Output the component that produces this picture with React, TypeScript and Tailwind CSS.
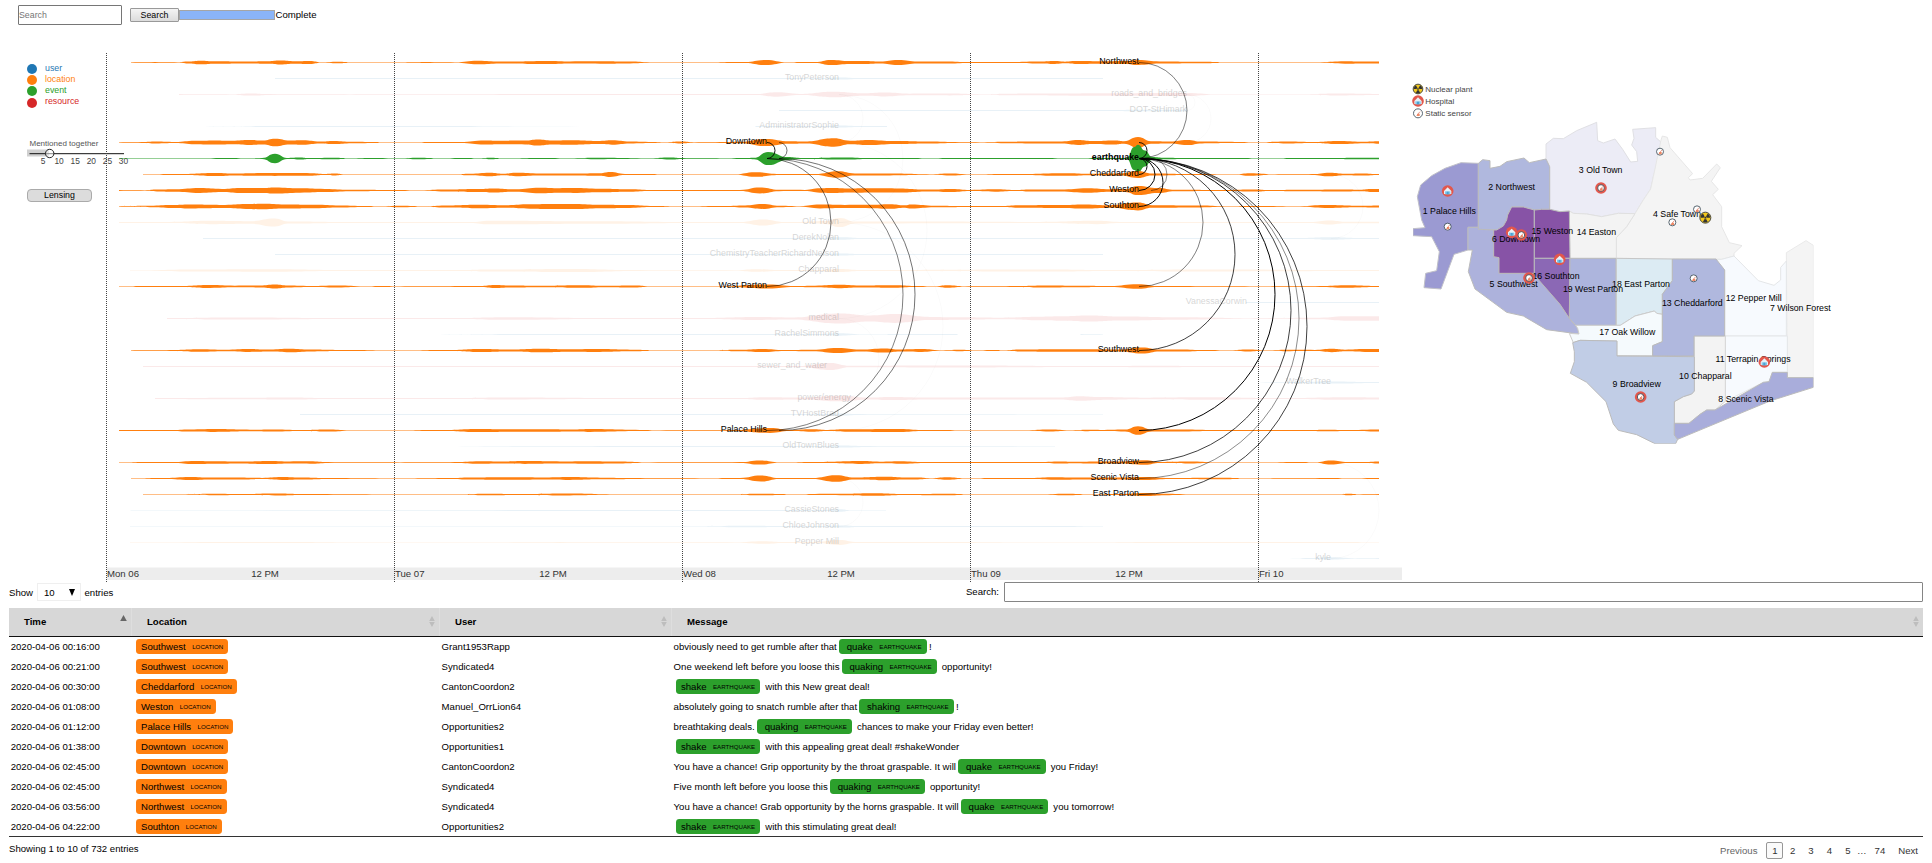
import React from "react";

const LOC = "#ff7f0e";
const EVT = "#2ca02c";
const USR = "#1f77b4";
const RES = "#d62728";

const FIRST_ROW = 62.5;
const ROW = 16;
const rowY = (i: number) => FIRST_ROW + i * ROW;

type Stream = { row: number; color: string; faint?: boolean; pts: string };

/* Each stream lists "x:half-thickness" samples along the time axis. */
const streams: Stream[] = [
  { row: 0, color: LOC, pts: "131:.3 155:.4 178:.3 188:1 200:1.8 215:1.2 245:.9 268:1.2 280:1.9 295:1.2 310:1.5 321:.3 338:.8 352:.3 395:.25 430:.4 455:.35 478:1.8 500:.9 550:1.6 570:1.1 600:1.2 630:.9 650:.3 700:.3 745:.5 765:2.6 788:.3 803:.5 815:.5 831:2.6 850:1.5 864:1.4 880:.9 898:2.4 918:.9 945:1.1 970:.4 1010:.4 1040:.9 1055:1.4 1065:.8 1075:1.4 1105:1.2 1125:1.4 1138:2.5 1160:1.1 1200:.8 1230:.3 1320:.35 1345:1.2 1362:.9 1379:.9" },
  { row: 1, color: USR, faint: true, pts: "275:.4 820:.4 840:1 860:.4 1103:.4" },
  { row: 2, color: RES, faint: true, pts: "179:.4 230:.3 250:1.1 270:.4 350:.3 500:.4 515:.6 600:.4 700:.4 755:.4 777:2.2 800:.6 833:2.8 865:1.2 885:1.9 910:.8 950:.9 980:.3 1010:.8 1050:.9 1100:1.3 1187:1.5 1215:.3 1300:.3 1340:1 1379:.6" },
  { row: 3, color: USR, faint: true, pts: "779:.4 1100:.4 1150:.7 1187:.7" },
  { row: 4, color: USR, faint: true, pts: "205:.1 280:.5 400:.5 580:.1 755:.1 756:.5 820:.5 840:1 860:.5 887:.4" },
  { row: 5, color: LOC, pts: "119:.35 142:.4 156:.9 175:.5 195:1.7 215:2.1 232:1.7 250:2.4 263:2 275:3.7 290:2 303:2.2 320:1 334:1.6 352:.7 378:.4 379:.2 420:.2 426:.4 460:.6 485:2.1 500:1.8 525:1.9 538:3 552:2 570:2.3 600:1.6 612:2.2 630:1 652:.6 665:.2 681:.9 694:.3 720:.4 740:.8 765:3.6 790:1.3 805:1 834:4.2 850:1.8 868:2.6 895:1.4 930:.9 955:.4 980:.3 1005:.7 1025:.9 1040:1 1062:1 1078:2.4 1092:1.4 1115:2 1124:1.3 1138:5.4 1151:1.2 1170:1 1187:2.6 1202:.9 1235:.6 1258:.3 1290:.9 1310:.5 1340:1.6 1365:.8 1379:1.2" },
  { row: 6, color: EVT, pts: "119:.35 136:.3 165:.3 200:.3 227:.6 250:.3 262:.4 275:4.7 287:.6 299:1 310:.4 334:.7 350:.2 371:.6 400:.3 418:.8 440:.3 465:.6 480:.3 490:.7 503:.2 545:.6 570:.3 595:.7 650:.3 670:1 683:.4 720:.3 748:.5 754:.7 768:6.6 788:1.4 800:.5 845:1.1 870:.5 910:.5 930:.3 951:.6 980:.4 1040:.5 1070:.3 1110:.6 1127:.5 1134:11.4 1138:13.8 1145:8 1152:1.6 1165:.7 1185:.4 1230:.6 1270:.3 1300:.6 1330:.4 1360:.7 1379:.8" },
  { row: 7, color: LOC, pts: "143:.3 180:.6 216:1.6 235:1 252:1.3 275:1.4 310:1.3 325:.6 334:1 345:.3 390:.2 455:.2 470:.8 490:1.8 503:.8 516:1.7 540:1 575:.9 600:1.2 610:2.4 625:.5 650:.5 662:.2 735:.3 755:2.3 780:.6 815:.4 838:3.2 855:1 890:.9 930:.3 950:1 970:.2 1010:.4 1068:1.3 1090:.7 1120:1 1138:3.4 1152:.9 1190:.4 1235:.2 1250:1.3 1275:.3 1312:.4 1330:1.8 1345:.8 1362:1.1 1379:.5" },
  { row: 8, color: LOC, pts: "119:.4 145:.3 157:.9 175:1.2 200:2.4 222:1.5 240:2.5 262:2.4 275:3.1 300:2.2 325:1.6 350:.8 395:.6 420:.3 445:1 480:1.5 493:2 515:1.2 540:2.8 560:2.3 573:2.4 600:1.7 630:1.2 650:.5 680:.6 700:.4 740:.6 760:3 779:.7 805:.6 820:2.2 832:2.4 850:1.9 862:2.2 895:2.1 930:.9 952:1.6 970:.6 995:1.2 1015:.5 1030:1 1060:1 1088:2.3 1110:1.3 1125:1.4 1138:4.6 1158:2.5 1175:.7 1220:.5 1255:1 1270:.4 1300:.7 1345:1 1360:.8 1372:1.5 1379:1.6" },
  { row: 9, color: LOC, pts: "119:.35 150:.7 172:1.4 190:1.9 225:1.5 246:2.4 263:2.8 285:2.1 315:1.8 340:1.1 365:.6 380:.3 400:.8 425:.3 445:1.1 480:1.8 505:1.3 530:2.2 550:2.5 575:2.6 600:1.7 630:1.4 650:.5 683:.3 725:.5 745:1 762:2.4 780:.7 800:.3 820:1.9 845:1.6 870:1.7 890:2.3 905:1.2 911:2 935:.8 970:.4 1000:.4 1020:1.2 1060:1.4 1085:2.1 1110:1.3 1138:3.9 1152:1.2 1200:.9 1225:.3 1258:.5 1300:.3 1325:1.4 1360:.7 1379:1.1" },
  { row: 10, color: LOC, faint: true, pts: "119:.4 170:.6 210:1.7 250:1.3 275:4 288:1 350:.5 470:.4 490:1.8 600:1.2 690:.4 740:.5 763:3 785:.5 800:.5 825:1.4 840:4.6 855:1 900:.9 1040:.6 1097:1.7 1120:.6 1310:.4 1330:2 1345:.8 1379:.8" },
  { row: 11, color: USR, faint: true, pts: "203:.5 820:.5 842:1.2 860:.5 1300:.5 1330:1.2 1360:.5 1379:.4" },
  { row: 12, color: USR, faint: true, pts: "275:.5 820:.5 842:1 860:.5 1103:.4" },
  { row: 13, color: LOC, faint: true, pts: "130:.2 200:1 270:1.2 340:.5 460:.5 490:1 570:1.6 640:.4 735:.3 755:1.3 780:.4 815:.4 840:1.5 860:.5 1050:1 1110:.4 1200:1 1379:.5" },
  { row: 14, color: LOC, pts: "119:.3 150:.6 180:.4 210:1.4 235:.8 260:.9 275:1.9 288:.9 310:.5 337:1 365:.3 382:.6 400:.3 455:.4 480:.6 495:1.6 510:1.1 540:.8 582:1.3 605:.7 635:1 650:.3 720:.3 768:2 795:.5 815:.8 838:1.7 860:1 895:1.2 915:.5 935:.3 947:1.3 965:.3 1010:.4 1050:1 1075:.8 1110:.6 1138:2.3 1158:.6 1190:.4 1250:.3 1320:.4 1345:1.2 1379:.5" },
  { row: 15, color: USR, faint: true, pts: "1246:.6 1379:.5" },
  { row: 16, color: RES, faint: true, pts: "167:.4 230:1 350:.4 450:.4 510:1.3 600:.5 700:.4 760:1.4 790:1 840:5 870:3 895:4.4 930:1.6 960:1.2 1000:.8 1040:1.8 1060:2.2 1090:3 1120:2 1180:1.2 1250:.3 1320:.8 1345:2.2 1379:2.2" },
  { row: 17, color: USR, faint: true, pts: "440:.1 500:.4 682:.4 820:.5 840:1.2 860:.3 887:.2 888:.5 957:.5 958:.1 1080:.1 1081:.4 1103:.3" },
  { row: 18, color: LOC, pts: "131:.3 170:.4 200:1.2 225:.7 250:1.4 270:1 290:1.7 310:.9 340:.5 400:.3 450:.5 480:1.5 510:1 540:1.8 570:1.2 600:1.4 630:.8 660:.3 710:.35 740:.8 762:1.6 785:.5 812:.8 838:2.6 860:1 885:2.1 900:1 922:1.4 940:.3 960:.7 975:.3 995:.6 1004:.3 1020:1 1055:1.3 1090:1.2 1120:1 1142:3 1160:.9 1180:1.1 1205:.5 1230:.2 1248:.9 1265:.2 1290:.7 1315:.6 1332:1.7 1345:.8 1365:1.4 1379:1.6" },
  { row: 19, color: RES, faint: true, pts: "143:.4 270:.6 400:.4 530:.6 740:.5 800:.6 830:3.6 850:.8 950:1 1100:.5 1160:.8 1200:.5 1379:.4" },
  { row: 20, color: USR, faint: true, pts: "1240:.1 1290:.4 1330:1.1 1379:.4" },
  { row: 21, color: RES, faint: true, pts: "155:.4 240:.8 290:1.1 330:.5 450:.4 510:.9 600:.5 740:.5 765:1.3 800:1 840:2.8 870:1 890:1.6 930:1 1060:1 1080:2.3 1100:1.4 1140:.8 1200:1.2 1280:.4 1350:1.3 1379:1.1" },
  { row: 22, color: USR, faint: true, pts: "300:.4 820:.4 840:1 860:.4 1103:.3" },
  { row: 23, color: LOC, pts: "119:.4 170:.4 190:1 215:1.4 250:.8 275:1.1 300:.6 330:1.1 350:.3 395:.3 440:.5 480:1.6 510:1.2 545:1.3 575:1 590:1.4 640:.6 660:.3 730:.4 770:2.4 790:.6 812:1.3 828:.6 845:1.2 900:1.5 922:.5 940:.5 965:.3 1025:.3 1050:1 1070:.3 1088:.7 1100:.6 1125:1 1138:4.3 1152:.9 1185:.9 1210:.5 1240:.4 1310:.4 1325:.7 1350:.4 1379:.9" },
  { row: 24, color: USR, faint: true, pts: "380:.1 600:.4 820:.4 840:1 870:.4 1055:.3" },
  { row: 25, color: LOC, pts: "119:.2 150:.4 172:.4 195:1.5 215:1.2 240:.9 270:1.6 290:1.1 310:1.2 328:.4 400:.3 455:.4 480:1.2 502:1 525:1.4 560:1.1 590:1.3 615:1 650:.3 740:.4 760:2.1 780:.3 820:.5 862:1.4 880:.8 900:1.2 925:.4 1040:.5 1060:1 1075:.7 1095:1.1 1120:1 1145:2.3 1160:.6 1190:1 1215:.3 1260:.3 1300:.5 1315:.3 1331:2.1 1348:.6 1365:.6 1379:1.1" },
  { row: 26, color: LOC, pts: "131:.3 165:.5 190:1.5 210:.9 235:1.1 262:.6 282:1.5 300:1 330:.4 400:.25 450:.4 470:1 500:1.3 520:1.2 545:1 570:1.4 600:.8 640:.4 700:.3 740:.6 761:3 779:.4 812:.5 836:3.3 855:1 886:1.7 905:1 918:.9 930:.3 947:1.3 965:.3 1000:.6 1030:.6 1055:1.3 1080:.9 1120:1 1145:1.6 1170:.6 1220:.8 1250:.3 1320:.4 1330:.5 1350:.3 1379:.5" },
  { row: 27, color: LOC, pts: "143:.3 180:.3 215:.7 240:.4 275:.9 305:.4 400:.25 455:.3 490:.8 520:.4 570:.9 610:.3 730:.3 760:.8 800:.3 815:.6 840:.7 875:1.2 905:.4 948:.8 970:.3 1040:.3 1066:.8 1090:.3 1120:.5 1145:1.5 1165:.7 1190:.3 1340:.3 1348:.8 1360:.3 1379:.4" },
  { row: 28, color: USR, faint: true, pts: "130:.1 131:.3 680:.4 820:.6 840:1.3 851:.3 886:.2" },
  { row: 29, color: USR, faint: true, pts: "130:.3 680:.3 755:.8 775:.4 820:.6 842:1 860:.4 1055:.5 1103:.3" },
  { row: 30, color: LOC, faint: true, pts: "130:.2 250:.4 400:.2 560:.4 735:.3 763:1.3 785:.5 815:.6 840:2.5 855:.6 935:.4 1050:.2 1200:.4 1340:.5 1379:.2" },
  { row: 31, color: USR, faint: true, pts: "1285:.1 1310:.5 1331:1.2 1355:.3 1379:.4" },
];

function streamPath(row: number, pts: string) {
  const y = rowY(row);
  const p = pts.split(" ").map((s) => s.split(":").map(Number));
  const seg = (a: number[], b: number[], sign: number) => {
    const m = (a[0] + b[0]) / 2;
    return `C${m} ${y + sign * a[1]} ${m} ${y + sign * b[1]} ${b[0]} ${y + sign * b[1]}`;
  };
  let d = `M${p[0][0]} ${y - p[0][1]}`;
  for (let i = 1; i < p.length; i++) d += seg(p[i - 1], p[i], -1);
  const last = p[p.length - 1];
  d += `L${last[0]} ${y + last[1]}`;
  for (let i = p.length - 1; i > 0; i--) d += seg(p[i], p[i - 1], 1);
  return d + "Z";
}

/* x, from row, to row, opacity */
const arcs: [number, number, number, number][] = [
  [767, 5, 6, 0.9], [779, 5, 6, 0.55], [767, 6, 14, 0.55], [767, 6, 23, 0.5], [779, 6, 23, 0.55],
  [1139, 0, 6, 0.5], [1139, 5, 6, 0.9], [1139, 6, 7, 0.95], [1139, 6, 8, 1], [1151, 6, 8, 0.45],
  [1139, 6, 9, 0.95], [1139, 6, 14, 0.5], [1139, 6, 18, 0.75], [1139, 6, 23, 1], [1139, 6, 25, 0.75],
  [1139, 6, 26, 0.45], [1139, 6, 27, 0.75],
  [839, 2, 5, 0.02], [839, 2, 10, 0.02], [839, 16, 21, 0.02], [839, 5, 16, 0.02], [839, 26, 29, 0.02],
  [1187, 2, 5, 0.02], [1187, 2, 3, 0.02], [1331, 7, 11, 0.02], [1331, 25, 31, 0.02], [839, 10, 23, 0.02],
];

const labels: [string, number, number][] = [
  ["Northwest", 1139, 0], ["Downtown", 767, 5], ["Cheddarford", 1139, 7], ["Weston", 1139, 8],
  ["Southton", 1139, 9], ["West Parton", 767, 14], ["Southwest", 1139, 18], ["Palace Hills", 767, 23],
  ["Broadview", 1139, 25], ["Scenic Vista", 1139, 26], ["East Parton", 1139, 27],
];
const faintLabels: [string, number, number][] = [
  ["TonyPeterson", 839, 1], ["roads_and_bridges", 1187, 2], ["DOT-StHimark", 1187, 3],
  ["AdministratorSophie", 839, 4], ["Old Town", 839, 10], ["DerekNolan", 839, 11],
  ["ChemistryTeacherRichardNelson", 839, 12], ["Chapparal", 839, 13], ["VanessaCorwin", 1247, 15],
  ["medical", 839, 16], ["RachelSimmons", 839, 17], ["sewer_and_water", 827, 19],
  ["WalkerTree", 1331, 20], ["power/energy", 851, 21], ["TVHostBrad", 839, 22],
  ["OldTownBlues", 839, 24], ["CassieStones", 839, 28], ["ChloeJohnson", 839, 29],
  ["Pepper Mill", 839, 30], ["kyle", 1331, 31],
];

const days: [number, string][] = [[106.5, "Mon 06"], [394.5, "Tue 07"], [682.5, "Wed 08"], [970.5, "Thu 09"], [1258.5, "Fri 10"]];

function Timeline() {
  return (
    <svg className="block shrink-0" width={1296} height={529} viewBox="106 53 1296 529">
      <rect x={107} y={567.5} width={1295.5} height={12.5} fill="#ededed" />
      {streams.map((s) => (
        <path key={s.row} d={streamPath(s.row, s.pts)} fill={s.color} opacity={s.faint ? 0.1 : 1} />
      ))}
      {days.map(([x]) => (
        <line key={x} x1={x} x2={x} y1={53} y2={582} stroke="#444" strokeWidth={1} strokeDasharray="1 1" />
      ))}
      {faintLabels.map(([t, x, r]) => (
        <text key={t} x={x} y={rowY(r) + 1.2} textAnchor="end" fontSize={8.85} opacity={0.16}>{t}</text>
      ))}
      {labels.map(([t, x, r]) => (
        <text key={t} x={x} y={rowY(r) + 1.2} textAnchor="end" fontSize={8.85}>{t}</text>
      ))}
      <text x={1139} y={rowY(6) + 1.2} textAnchor="end" fontSize={8.85} fontWeight="bold">earthquake</text>
      {arcs.map(([x, a, b, o], i) => {
        const r = (rowY(b) - rowY(a)) / 2;
        return <path key={i} d={`M${x} ${rowY(a)}A${r} ${r} 0 0 1 ${x} ${rowY(b)}`} fill="none" stroke="#000" strokeOpacity={o} />;
      })}
      {days.map(([x, t]) => (
        <g key={t} fontSize={9.6} fill="#333">
          <text x={x + 0.5} y={576.5}>{t}</text>
          {x < 1200 && <text x={x + 158.5} y={576.5} textAnchor="middle">12 PM</text>}
        </g>
      ))}
    </svg>
  );
}

/* District outlines, drawn at three units per pixel. */
const districts: [string, string, string][] = [
  ["#ececf6", "#e0e0e4", "438,267 438,222 460,205 490,206 530,182 590,157 593,212 610,219 645,207 668,238 692,276 713,274 710,245 695,225 702,205 698,178 767,173 767,202 787,220 760,320 752,357 728,393 705,431 655,430 605,440 560,432 520,430 508,423 480,425 449,418 449,290"],
  ["#f4f4f4", "#e6e6e6", "783,210 787,198 802,202 810,233 878,311 865,323 870,330 908,325 950,282 961,293 934,334 955,358 938,374 965,410 965,470 988,518 1026,527 1002,550 1002,558 965,568 649,565 649,503 680,470 705,431 728,393 752,357 760,320"],
  ["#f3f3f3", "#e0e0e0", "508,423 520,430 560,432 605,440 655,430 705,431 680,470 649,503 649,565 510,565"],
  ["#f4f4f4", "#e9e9e9", "1159,548 1218,512 1240,526 1240,923 1162,923"],
  ["#f7fafe", "#e4e6e8", "948,568 965,568 1002,558 1075,632 1122,646 1142,630 1142,592 1159,573 1159,798 974,798 974,600"],
  ["#f7fafe", "#e4e6e8", "976,798 1162,798 1162,907 1117,907 1107,935 1090,937 976,994"],
  ["#f3f3f3", "#d5d5d5", "883,798 976,798 976,994 945,1020 920,1020 900,1033 867,1060 823,1060 823,995 850,980 875,972 883,963"],
  ["#9b9ad2", "#c0c0c8", "235,280 183,278 135,295 95,317 62,345 52,380 65,450 75,473 39,476 39,497 95,500 118,545 110,602 77,610 72,653 123,657 162,553 204,540 204,472 235,472"],
  ["#b0b8de", "#bbbbbb", "235,280 248,269 270,272 270,295 300,289 320,275 372,264 388,278 438,267 449,290 449,418 425,418 403,420 370,411 335,411 323,435 320,450 310,468 290,480 235,478"],
  ["#adb2dc", "#bbbbbb", "204,472 235,472 235,478 281,480 281,560 297,563 297,610 403,610 480,703 508,745 533,775 537,792 440,779 370,738 320,727 225,657 205,605 217,540 204,540"],
  ["#8753a6", "#bbbbbb", "335,411 370,411 403,420 403,610 297,610 297,563 281,560 281,480 290,480 310,468 320,450 323,435"],
  ["#8753a6", "#bbbbbb", "403,420 425,418 449,418 480,425 508,423 510,565 403,565"],
  ["#8b68b5", "#bbbbbb", "403,565 510,565 508,745 480,703 403,615"],
  ["#adb5dd", "#bbbbbb", "510,565 648,565 648,766 527,766 508,745"],
  ["#dcebf3", "#c6c6c6", "649,565 817,567 817,632 787,673 787,733 770,730 763,723 705,738 661,766 649,766"],
  ["#f5fafd", "#cccccc", "527,766 661,766 705,738 763,723 770,730 787,733 787,815 758,827 758,857 650,857 650,813 540,811 520,818 508,790 537,792 533,775"],
  ["#b0b8de", "#bbbbbb", "817,567 948,567 974,600 974,798 882,798 882,858 758,858 758,827 787,815 787,673 817,632"],
  ["#c1cde6", "#bbbbbb", "540,811 651,813 651,858 883,860 883,963 875,972 850,980 823,995 823,1095 833,1108 827,1121 765,1121 710,1094 655,1081 640,1062 618,995 560,937 511,910 523,875 523,845 518,818"],
  ["#a9addb", "#bbbbbb", "823,1060 867,1060 900,1033 920,1020 945,1020 1090,937 1107,935 1117,907 1162,907 1162,923 1240,923 1240,952 1110,993 833,1108 823,1095"],
];

const districtNames: [string, number, number][] = [
  ["1 Palace Hills", 148, 431], ["2 Northwest", 335, 359], ["3 Old Town", 602, 308], ["4 Safe Town", 831, 440],
  ["5 Southwest", 341, 650], ["6 Downtown", 348, 515], ["7 Wilson Forest", 1201, 724], ["8 Scenic Vista", 1038, 995],
  ["9 Broadview", 710, 952], ["10 Chapparal", 916, 928], ["11 Terrapin Springs", 1059, 875],
  ["12 Pepper Mill", 1061, 694], ["13 Cheddarford", 877, 707], ["14 Easton", 589, 494], ["15 Weston", 457, 491],
  ["16 Southton", 468, 626], ["17 Oak Willow", 682, 794], ["18 East Parton", 723, 650], ["19 West Parton", 579, 665],
];

function Hospital({ x, y }: { x: number; y: number }) {
  return (
    <g transform={`translate(${x} ${y})`}>
      <circle r={17.5} fill="#e2574c" />
      <path d="M-11 0L0-11L11 0V9H-11Z" fill="#e8f1f7" />
      <path d="M-8 1H8V10H-8Z" fill="#84c8ea" />
      <path d="M-3 2H3V10H-3Z" fill="#4aa3d4" />
    </g>
  );
}

function Sensor({ x, y, ring, small }: { x: number; y: number; ring?: boolean; small?: boolean }) {
  return (
    <g transform={`translate(${x} ${y})`}>
      {ring && <circle r={17.5} fill="#e2574c" />}
      <circle r={small ? 10.5 : ring ? 10 : 13.5} fill="#fff" stroke="#40505c" strokeWidth={2.6} />
      <path d="M-5 8L-1 1H5V8Z" fill="#ee8a66" />
      <path d="M-2 4L6-5" stroke="#e2674c" strokeWidth={2} />
    </g>
  );
}

function Nuclear({ x, y, r }: { x: number; y: number; r: number }) {
  const blade = `M0 0L${-r * 0.4} ${-r * 0.69}A${r * 0.8} ${r * 0.8} 0 0 1 ${r * 0.4} ${-r * 0.69}Z`;
  return (
    <g transform={`translate(${x} ${y})`}>
      <circle r={r - 1.5} fill="#f2c81e" stroke="#4a4a40" strokeWidth={3} />
      <path d={blade} fill="#333" transform="rotate(60)" />
      <path d={blade} fill="#333" transform="rotate(180)" />
      <path d={blade} fill="#333" transform="rotate(300)" />
      <circle r={3.5} fill="#333" stroke="#f2c81e" strokeWidth={1.5} />
    </g>
  );
}

function CityMap() {
  return (
    <svg className="block shrink-0" width={530} height={529} viewBox="6 -51 1590 1587">
      <clipPath id="mapClip"><rect x={39} y={120} width={1202} height={1001} /></clipPath>
      {districts.map(([fill, stroke, pts], i) => (
        <polygon key={i} points={pts} fill={fill} stroke={stroke} strokeWidth={3} strokeLinejoin="round" clipPath="url(#mapClip)" />
      ))}
      <Nuclear x={54} y={57} r={16} />
      <Hospital x={54} y={93} />
      <Sensor x={54} y={130} />
      <g fontSize={24} fill="#444">
        <text x={76} y={65}>Nuclear plant</text>
        <text x={76} y={101}>Hospital</text>
        <text x={76} y={137}>Static sensor</text>
      </g>
      <g fontSize={26.3} textAnchor="middle">
        {districtNames.map(([t, x, y]) => <text key={t} x={x} y={y}>{t}</text>)}
      </g>
      <Hospital x={143} y={363} />
      <Hospital x={335} y={487} />
      <Hospital x={479} y={568} />
      <Hospital x={1093} y={876} />
      <Sensor ring x={364} y={495} />
      <Sensor ring x={387} y={624} />
      <Sensor ring x={603} y={354} />
      <Sensor ring x={722} y={981} />
      <Sensor small x={143} y={470} />
      <Sensor small x={780} y={245} />
      <Sensor small x={891} y={418} />
      <Sensor small x={817} y={457} />
      <Sensor small x={881} y={625} />
      <Nuclear x={916} y={443} r={18} />
    </svg>
  );
}

function Legend() {
  const items: [string, string, string][] = [
    ["user", "bg-[#1f77b4]", "text-[#1f77b4]"],
    ["location", "bg-[#ff7f0e]", "text-[#ff7f0e]"],
    ["event", "bg-[#2ca02c]", "text-[#2ca02c]"],
    ["resource", "bg-[#d62728]", "text-[#d62728]"],
  ];
  return (
    <ul className="flex flex-col gap-px pt-[11px] pl-[27px]">
      {items.map(([name, dot, text]) => (
        <li key={name} className="flex h-[10.2px] items-center gap-2">
          <span className={`size-[10px] shrink-0 rounded-full ${dot}`} />
          <span className={`-mt-[2px] leading-none ${text}`}>{name}</span>
        </li>
      ))}
    </ul>
  );
}

function Sidebar() {
  return (
    <aside className="flex w-[106px] shrink-0 flex-col text-[8.8px]">
      <Legend />
      <svg className="mt-[28px] ml-[27px] block shrink-0 overflow-visible" width={79} height={34} viewBox="27 136 79 34">
        <text x={29.5} y={145.5} fontSize={8} fill="#555">Mentioned together</text>
        <rect x={27} y={149.5} width={22} height={7} fill="#d0d0d0" />
        <line x1={29.5} x2={124} y1={153.7} y2={153.7} stroke="#111" />
        <circle cx={49.7} cy={153.5} r={4.2} fill="#fff" fillOpacity={0.5} stroke="#222" />
        {[5, 10, 15, 20, 25, 30].map((n, i) => (
          <text key={n} x={43 + i * 16.1} y={163.5} textAnchor="middle" fontSize={8.4} fill="#444">{n}</text>
        ))}
      </svg>
      <button className="mt-[19px] ml-[27px] h-[13px] w-[65px] rounded-[4px] border border-[#aaa] bg-[#dcdcdc] leading-[11px]">Lensing</button>
    </aside>
  );
}

type Msg = { time: string; loc: string; user: string; pre?: string; word: string; post: string };
const rows: Msg[] = [
  { time: "2020-04-06 00:16:00", loc: "Southwest", user: "Grant1953Rapp", pre: "obviously need to get rumble after that", word: "quake", post: "!" },
  { time: "2020-04-06 00:21:00", loc: "Southwest", user: "Syndicated4", pre: "One weekend left before you loose this", word: "quaking", post: " opportunity!" },
  { time: "2020-04-06 00:30:00", loc: "Cheddarford", user: "CantonCoordon2", word: "shake", post: " with this New great deal!" },
  { time: "2020-04-06 01:08:00", loc: "Weston", user: "Manuel_OrrLion64", pre: "absolutely going to snatch rumble after that", word: "shaking", post: "!" },
  { time: "2020-04-06 01:12:00", loc: "Palace Hills", user: "Opportunities2", pre: "breathtaking deals.", word: "quaking", post: " chances to make your Friday even better!" },
  { time: "2020-04-06 01:38:00", loc: "Downtown", user: "Opportunities1", word: "shake", post: " with this appealing great deal! #shakeWonder" },
  { time: "2020-04-06 02:45:00", loc: "Downtown", user: "CantonCoordon2", pre: "You have a chance! Grip opportunity by the throat graspable. It will", word: "quake", post: " you Friday!" },
  { time: "2020-04-06 02:45:00", loc: "Northwest", user: "Syndicated4", pre: "Five month left before you loose this", word: "quaking", post: " opportunity!" },
  { time: "2020-04-06 03:56:00", loc: "Northwest", user: "Syndicated4", pre: "You have a chance! Grab opportunity by the horns graspable. It will", word: "quake", post: " you tomorrow!" },
  { time: "2020-04-06 04:22:00", loc: "Southton", user: "Opportunities2", word: "shake", post: " with this stimulating great deal!" },
];

function Tag({ word, kind, className }: { word: string; kind: string; className: string }) {
  return (
    <span className={`mx-[2.4px] flex h-[15px] items-center gap-[6.4px] rounded-[3.4px] pr-[5px] ${className}`}>
      <span>{word}</span>
      <span className="mt-[2px] text-[6.15px] uppercase leading-none">{kind}</span>
    </span>
  );
}

function SortIcon({ active }: { active?: boolean }) {
  return active ? (
    <svg className="mb-[8px] block" width={7} height={6} viewBox="0 0 7 6"><path d="M3.5 0L6.8 6H.2Z" fill="#666" /></svg>
  ) : (
    <svg className="block" width={6} height={11} viewBox="0 0 6 11"><path d="M3 0L5.8 5H.2ZM3 11L5.8 6H.2Z" fill="#bdbdbd" /></svg>
  );
}

const cols = "grid grid-cols-[123px_308px_232px_1fr]";

function DataTable() {
  return (
    <section className="px-[9px] text-[9.6px]">
      <div className="flex h-[26px] items-start justify-between">
        <div className="flex items-center pt-px">
          <span>Show</span>
          <span className="ml-[4px] mr-[3.5px] flex h-[18px] w-[44px] items-center justify-between border border-[#efefef] pl-[6px] pr-[5px]">
            10
            <svg width={6} height={7} viewBox="0 0 6 7"><path d="M0 0H6L3 7Z" fill="#000" /></svg>
          </span>
          <span>entries</span>
        </div>
        <label className="flex items-center gap-[5px]">
          <span className="-mt-[2px]">Search:</span>
          <input className="h-[20px] w-[919px] rounded-[1px] border border-[#858585] bg-white" />
        </label>
      </div>
      <div className={`${cols} h-[29px] border-b border-[#111] bg-[#d7d7d7] font-bold`}>
        {["Time", "Location", "User", "Message"].map((h, i) => (
          <div key={h} className="flex items-center justify-between border-r border-[#dedede] pb-px pl-[15px] pr-[4px] last:border-r-0">
            <span>{h}</span>
            <SortIcon active={i === 0} />
          </div>
        ))}
      </div>
      <div className="-mt-px border-b border-[#333]">
        {rows.map((r) => (
          <div key={r.time + r.loc} className={`${cols} h-[20px] items-center`}>
            <span className="pl-[1.7px]">{r.time}</span>
            <span className="flex pl-[1.6px]"><Tag word={r.loc} kind="Location" className="bg-[#ff7f0e] pl-[5px]" /></span>
            <span className="pl-[1.6px]">{r.user}</span>
            <span className="flex items-center whitespace-pre pl-[1.6px]">
              {r.pre && <span>{r.pre}</span>}
              <Tag word={r.word} kind="Earthquake" className={r.pre ? "bg-[#2ca02c] pl-[7.6px]" : "bg-[#2ca02c] pl-[5px]"} />
              <span>{r.post}</span>
            </span>
          </div>
        ))}
      </div>
      <div className="flex items-center justify-between">
        <span className="pt-px">Showing 1 to 10 of 732 entries</span>
        <nav className="flex items-center pt-[5px] pr-[5px] text-[#333]">
          <span className="mr-[9px] text-[#666]">Previous</span>
          <span className="flex h-[17px] w-[17px] items-center justify-center rounded-[2px] border border-[#979797] bg-[#fafafa]">1</span>
          {["2", "3", "4", "5"].map((n) => <span key={n} className="w-[18.4px] text-center">{n}</span>)}
          <span>…</span>
          <span className="ml-[8px] mr-[13px]">74</span>
          <span>Next</span>
        </nav>
      </div>
    </section>
  );
}

export default function App() {
  return (
    <main className="flex h-[863px] w-[1932px] flex-col overflow-hidden bg-white font-['Liberation_Sans',Arial,sans-serif] text-black leading-[11px]">
      <header className="flex h-[53px] shrink-0 items-start pl-[18px] text-[9.6px]">
        <input placeholder="Search" className="mt-[5px] h-[20px] w-[104px] rounded-[1px] border border-[#767676] text-[8.8px] placeholder:text-[#757575]" />
        <button className="mt-[8px] ml-[8px] h-[14px] w-[49px] rounded-[1px] border border-[#999] bg-linear-to-b from-[#f4f4f4] to-[#dcdcdc] text-[8.8px] leading-[12px]">Search</button>
        <div className="mt-[10px] h-[10px] w-[96px] border border-[#a5a5a5] bg-[#8ab4f8]" />
        <span className="mt-[9px] ml-[0.5px]">Complete</span>
      </header>
      <div className="flex h-[529px] shrink-0">
        <Sidebar />
        <Timeline />
        <CityMap />
      </div>
      <DataTable />
    </main>
  );
}
